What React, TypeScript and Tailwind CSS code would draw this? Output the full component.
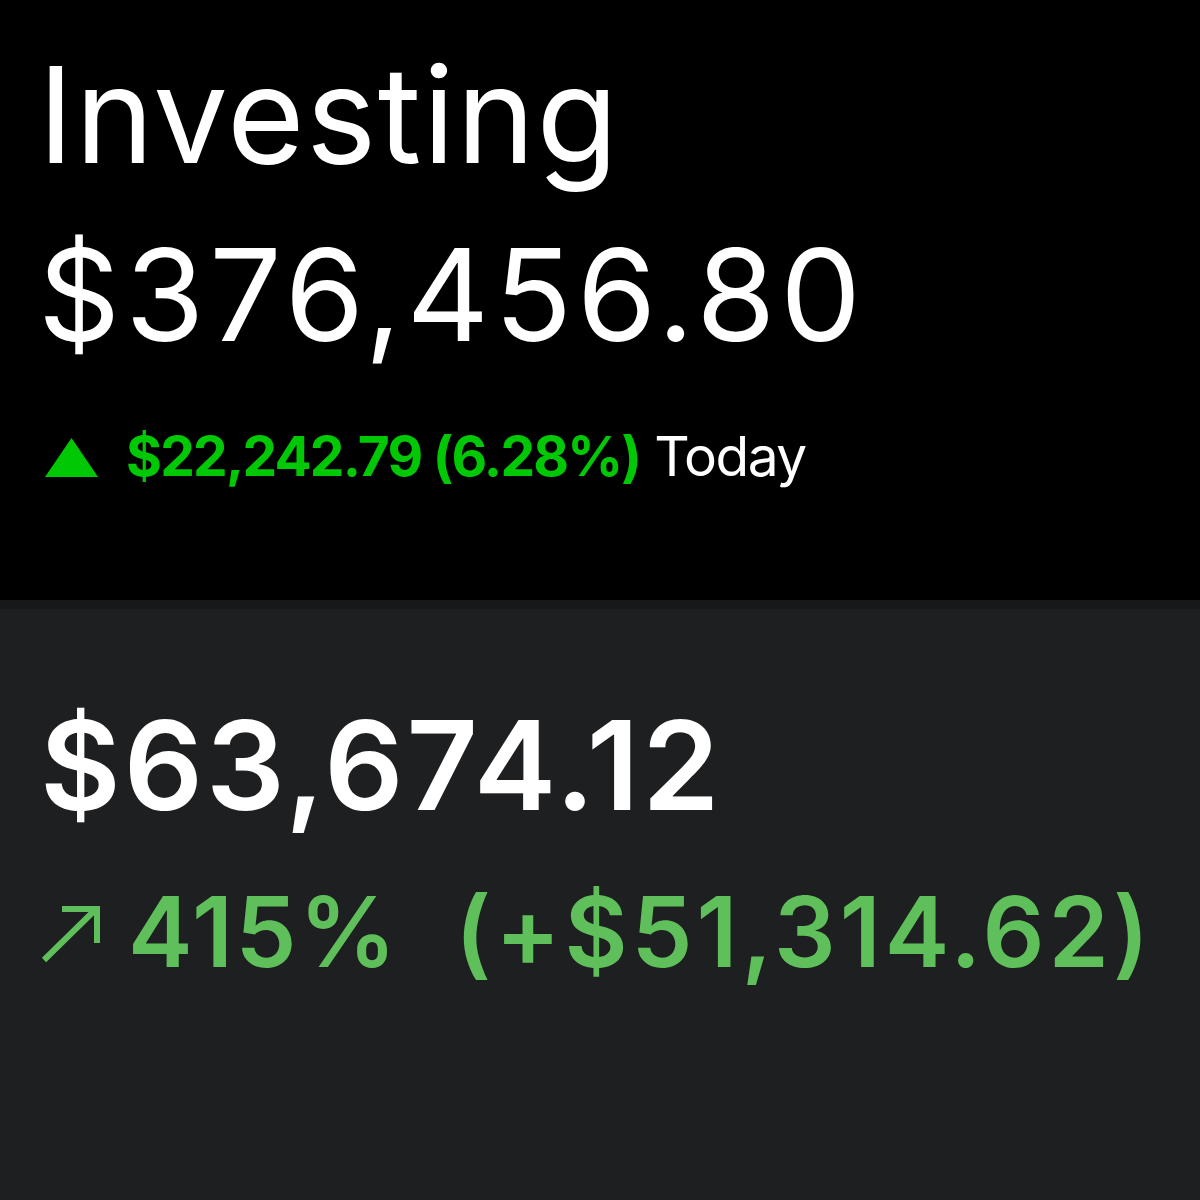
import React from 'react';

export default function App() {
  return (
    <div className="w-[1200px] h-[1200px] flex flex-col font-['Inter',sans-serif] overflow-hidden">
      <section className="h-[600px] bg-black pl-[38px] pr-[45px] pt-[48px] flex flex-col">
        <h1 className="text-[133px] leading-[1] text-white font-normal tracking-[1.5px]">Investing</h1>
        <div className="mt-[50px] text-[128px] leading-[1] text-white font-normal tracking-[5px]">$376,456.80</div>
        <div className="mt-[70px] ml-[7px] flex items-center gap-[28px] text-[55px] leading-[1]">
          <svg width="53" height="39" viewBox="0 0 53 39" className="shrink-0 mt-[2px]">
            <polygon points="26.5,0 53,39 0,39" fill="#00c805" />
          </svg>
          <span className="flex items-baseline gap-[14px]">
            <span className="text-[#00c805] font-bold tracking-[-1.8px]">$22,242.79 (6.28%)</span>
            <span className="text-white font-normal tracking-[-1.5px]">Today</span>
          </span>
        </div>
      </section>
      <section className="flex-1 bg-[#1e1f21] border-t-[9px] border-[#17181a] pl-[40px] pr-[45px] pt-[94px]">
        <div className="text-[124px] leading-[1] text-white font-semibold tracking-[3px]">$63,674.12</div>
        <div className="mt-[56px] flex items-center text-[97px] leading-[1] text-[#5fbf5a] font-semibold">
          <svg width="62" height="58" viewBox="0 0 62 58" className="shrink-0 mr-[26px] mt-[4px]">
            <path d="M4 55 L56 4 M22 4 L57 4 L57 38" stroke="#5fbf5a" strokeWidth="6" fill="none" />
          </svg>
          <span className="tracking-[2.5px]">415%</span>
          <span className="ml-[56px] tracking-[4px]">(+$51,314.62)</span>
        </div>
      </section>
    </div>
  );
}
